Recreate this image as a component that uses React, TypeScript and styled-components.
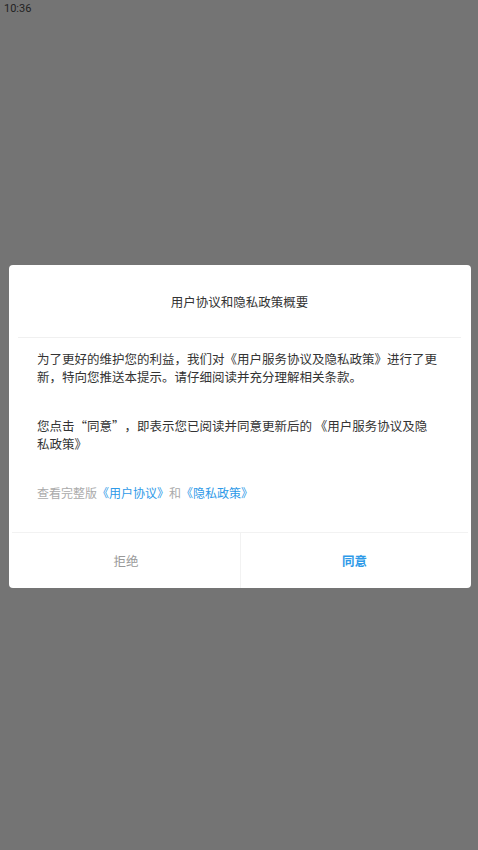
import * as React from "react";
import styled, { createGlobalStyle } from "styled-components";

const GlobalStyle = createGlobalStyle`
  html, body {
    margin: 0;
    padding: 0;
    background-color: #747474;
  }
  body {
    font-family: "Noto Sans CJK SC", "Liberation Sans", sans-serif;
  }
`;

const App: React.FC = () => {
  return (
    <>
      <GlobalStyle />
      <Screen>
        <StatusBar>10:36</StatusBar>
        <Overlay>
          <Dialog>
            <Header>用户协议和隐私政策概要</Header>
            <Body>
              <Paragraph>
                为了更好的维护您的利益，我们对《用户服务协议及隐私政策》进行了更新，特向您推送本提示。请仔细阅读并充分理解相关条款。
              </Paragraph>
              <Paragraph>
                您点击<Quote $side="open">“</Quote>同意<Quote $side="close">”</Quote>，即表示您已阅读并同意更新后的 《用户服务协议及隐私政策》
              </Paragraph>
              <LinkLine>
                查看完整版<Link>《用户协议》</Link>和<Link>《隐私政策》</Link>
              </LinkLine>
            </Body>
            <Footer>
              <ActionButton>拒绝</ActionButton>
              <ActionButton $primary>同意</ActionButton>
            </Footer>
          </Dialog>
        </Overlay>
      </Screen>
    </>
  );
};

const Screen = styled.div`
  width: 478px;
  height: 850px;
  display: flex;
  flex-direction: column;
  background-color: #747474;
`;

const StatusBar = styled.div`
  height: 18px;
  padding: 2px 0 0 4px;
  font-family: "Roboto", "Liberation Sans", sans-serif;
  font-size: 11px;
  line-height: 14px;
  color: #222;
`;

const Overlay = styled.div`
  padding: 245px 7px 0 9px;
`;

const Dialog = styled.div`
  background-color: #fff;
  border-radius: 4px;
  overflow: hidden;
`;

const Header = styled.div`
  height: 72px;
  margin: 0 10px 0 9px;
  display: flex;
  align-items: center;
  justify-content: center;
  border-bottom: 1px solid #f0f0f0;
  font-size: 12.5px;
  color: #333;
`;

const Body = styled.div`
  padding: 12px 33px 30px 28px;
  display: flex;
  flex-direction: column;
  gap: 31px;
`;

const Paragraph = styled.p`
  margin: 0;
  font-size: 12.5px;
  line-height: 18px;
  color: #333;
`;

const Quote = styled.span<{ $side: "open" | "close" }>`
  display: inline-block;
  width: 1em;
  text-align: ${(p) => (p.$side === "open" ? "right" : "left")};
`;

const LinkLine = styled.p`
  margin: 0;
  font-size: 12px;
  line-height: 18px;
  color: #aaa;
`;

const Link = styled.span`
  color: #2e9ae8;
`;

const Footer = styled.div`
  display: grid;
  grid-template-columns: 1fr 1fr;
  height: 55px;
  margin: 0 3px;
  border-top: 1px solid #f2f2f2;
`;

const ActionButton = styled.button<{ $primary?: boolean }>`
  padding: 0;
  border: none;
  background: transparent;
  font-family: "Noto Sans CJK SC", sans-serif;
  font-size: 12.5px;
  font-weight: ${(p) => (p.$primary ? 700 : 400)};
  color: ${(p) => (p.$primary ? "#2e9ae8" : "#999")};
  border-left: ${(p) => (p.$primary ? "1px solid #f2f2f2" : "none")};
`;

export default App;
